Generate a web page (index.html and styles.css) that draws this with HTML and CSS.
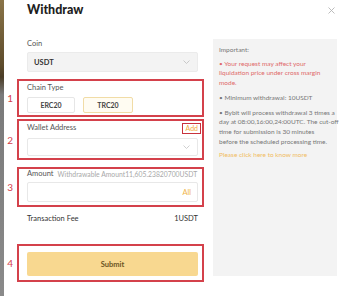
FILE: index.html
```html
<!DOCTYPE html>
<html lang="en">

<head>
    <meta charset="UTF-8">
    <meta name="viewport" content="width=device-width, initial-scale=1.0">
    <title>Withdraw</title>
    <link rel="stylesheet" href="styles.css">
</head>

<body>
    <div class="page">
        <!-- Dimmed page behind the modal -->
        <div class="backdrop"></div>

        <div class="dialog">
            <div class="dialog-head">
                <h1>Withdraw</h1>
                <svg class="close" width="7" height="7" viewBox="0 0 7 7">
                    <path d="M0.5 0.5 L6.5 6.5 M6.5 0.5 L0.5 6.5" stroke="#b5b5b5" stroke-width="0.9" fill="none" />
                </svg>
            </div>

            <div class="dialog-body">
                <div class="form">
                    <div class="field-label plain">Coin</div>
                    <div class="plain">
                        <div class="select">
                            <span class="select-value">USDT</span>
                            <svg class="chevron" width="7" height="4" viewBox="0 0 7 4">
                                <path d="M0.5 0.5 L3.5 3.5 L6.5 0.5" stroke="#bdbdbd" stroke-width="0.8" fill="none" />
                            </svg>
                        </div>
                    </div>

                    <!-- 1 -->
                    <div class="mark mark-chain">
                        <span class="mark-num">1</span>
                        <div class="field-label">Chain Type</div>
                        <div class="chains">
                            <span class="chain">ERC20</span>
                            <span class="chain active">TRC20</span>
                        </div>
                    </div>

                    <!-- 2 -->
                    <div class="mark mark-wallet">
                        <span class="mark-num">2</span>
                        <div class="label-row">
                            <span class="field-label">Wallet Address</span>
                            <span class="add">Add</span>
                        </div>
                        <div class="input wallet-input">
                            <svg class="chevron" width="7" height="4" viewBox="0 0 7 4">
                                <path d="M0.5 0.5 L3.5 3.5 L6.5 0.5" stroke="#c4c4c4" stroke-width="0.8" fill="none" />
                            </svg>
                        </div>
                    </div>

                    <!-- 3 -->
                    <div class="mark mark-amount">
                        <span class="mark-num">3</span>
                        <div class="label-row left">
                            <span class="field-label">Amount</span>
                            <span class="hint">Withdrawable Amount11,605.23820700USDT</span>
                        </div>
                        <div class="input amount-input">
                            <span class="all">All</span>
                        </div>
                    </div>

                    <div class="fee plain">
                        <span>Transaction Fee</span>
                        <span>1USDT</span>
                    </div>

                    <!-- 4 -->
                    <div class="mark mark-submit">
                        <span class="mark-num">4</span>
                        <button class="submit">Submit</button>
                    </div>
                </div>

                <aside class="notice">
                    <p class="notice-title">Important:</p>
                    <p class="warn">• Your request may affect your<br>liquidation price under cross margin<br>mode.</p>
                    <p>• Minimum withdrawal: 10USDT</p>
                    <p>• Bybit will process withdrawal 3 times a<br>day at 08:00,16:00,24:00UTC. The cut-off<br>time for submission is 30 minutes<br>before the scheduled processing time.</p>
                    <p class="more">Please click here to know more</p>
                </aside>
            </div>
        </div>
    </div>
</body>

</html>
```

FILE: styles.css
```css
/* Global Reset */
* {
    margin: 0;
    padding: 0;
    box-sizing: border-box;
}

body {
    font-family: 'Lato', 'Liberation Sans', sans-serif;
    background: #fff;
    color: #333;
    width: 361px;
    height: 296px;
    overflow: hidden;
}

.page {
    display: flex;
    height: 296px;
}

/* Strip of the page behind the modal */
.backdrop {
    width: 4px;
    flex-shrink: 0;
    background: linear-gradient(#8a7448 0, #5e4c2c 22%, #4a3c26 26%, #7a7a7a 32%, #8a8a8a 100%);
}

.dialog {
    flex: 1;
    background: #fff;
}

/* Header */
.dialog-head {
    display: flex;
    justify-content: space-between;
    align-items: center;
    height: 20px;
    padding: 0 26px 0 23px;
}

h1 {
    font-size: 12.5px;
    font-weight: 900;
    color: #1e1e1e;
    line-height: 20px;
}

.close {
    display: block;
}

/* Body */
.dialog-body {
    display: flex;
    gap: 9px;
    padding: 19px 0 0 13px;
}

.form {
    width: 187px;
    flex-shrink: 0;
}

.plain {
    padding: 0 6px 0 10px;
}

.field-label {
    font-size: 7.5px;
    line-height: 10px;
    color: #555;
}

/* Select */
.select {
    display: flex;
    justify-content: space-between;
    align-items: center;
    height: 20px;
    margin-top: 3px;
    padding: 0 7px 0 6px;
    background: #f3f3f3;
    border: 1px solid #ebebeb;
    border-radius: 2px;
}

.select-value {
    font-size: 7.5px;
    font-weight: 700;
    color: #333;
}

.chevron {
    display: block;
}

/* Annotation boxes */
.mark {
    position: relative;
    border: 2px solid #d4414b;
    padding: 0 4px 0 8px;
}

.mark-num {
    position: absolute;
    right: calc(100% + 6px);
    top: 50%;
    transform: translateY(-50%);
    font-size: 10px;
    color: #d4414b;
    line-height: 10px;
}

.mark-chain {
    margin-top: 7px;
    padding-top: 2px;
    padding-bottom: 2px;
}

.mark-wallet {
    margin-top: 2px;
    padding-top: 2px;
    padding-bottom: 2px;
}

.mark-amount {
    margin-top: 7px;
    padding-bottom: 3px;
}

.mark-submit {
    margin-top: 20px;
    padding-top: 6px;
    padding-bottom: 4px;
}

/* Chain type buttons */
.chains {
    display: flex;
    gap: 8px;
    margin-top: 4px;
}

.chain {
    display: flex;
    justify-content: center;
    align-items: center;
    height: 16px;
    width: 48px;
    font-size: 7px;
    font-weight: 700;
    color: #444;
    background: #fff;
    border: 1px solid #e6e6e6;
    border-radius: 2px;
}

.chain.active {
    width: 50px;
    background: #fffcf2;
    border-color: #f1dca6;
}

/* Wallet / amount */
.label-row {
    display: flex;
    justify-content: space-between;
    align-items: center;
    height: 10px;
}

.label-row.left {
    justify-content: flex-start;
    gap: 4px;
}

.add {
    font-size: 7px;
    line-height: 9px;
    color: #f0aa3a;
    border: 1.5px solid #c8323c;
    padding: 0 2px;
    margin-right: -3px;
}

.hint {
    font-size: 6.8px;
    line-height: 10px;
    color: #a9a9a9;
    white-space: nowrap;
}

.input {
    display: flex;
    justify-content: flex-end;
    align-items: center;
    background: #fff;
    border: 1px solid #e8e8e8;
    border-radius: 2px;
}

.wallet-input {
    height: 18px;
    margin-top: 5px;
    padding-right: 7px;
}

.amount-input {
    height: 20px;
    margin-top: 3px;
    padding-right: 6px;
}

.all {
    font-size: 7.5px;
    color: #f0b44a;
}

/* Fee */
.fee {
    display: flex;
    justify-content: space-between;
    margin-top: 7px;
    font-size: 7.5px;
    line-height: 10px;
    color: #333;
}

/* Submit */
.submit {
    display: block;
    width: 100%;
    height: 24px;
    background: #f8d890;
    border: none;
    border-radius: 2px;
    font-family: inherit;
    font-size: 7.5px;
    font-weight: 700;
    color: #6b5424;
}

/* Side notice */
.notice {
    width: 124px;
    height: 237px;
    background: #f3f3f3;
    padding: 6px 2px 0 6px;
    font-size: 6.5px;
    line-height: 9.7px;
    color: #777;
    white-space: nowrap;
}

.notice p {
    margin-top: 5px;
}

.notice .notice-title {
    margin-top: 0;
}

.notice .warn {
    margin-top: 4px;
    color: #e06a6a;
}

.notice .more {
    margin-top: 4px;
    color: #f1bc62;
}
```
